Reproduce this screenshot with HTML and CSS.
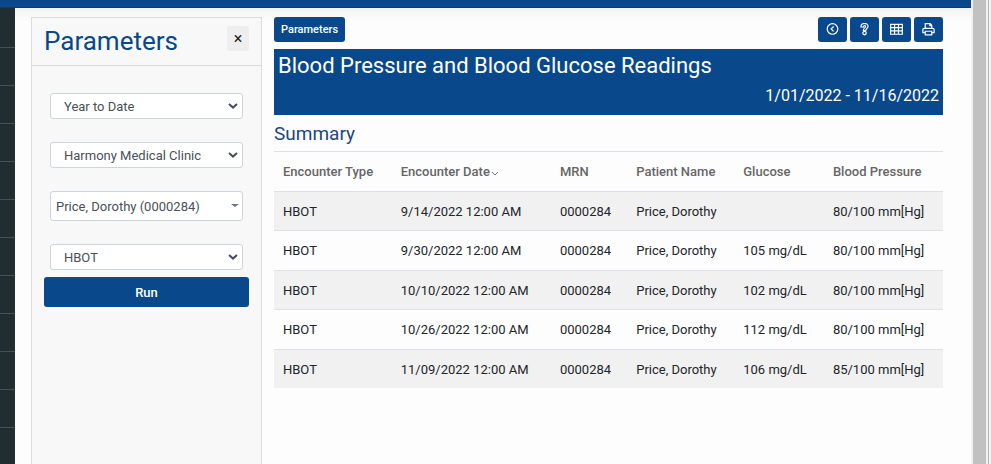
FILE: index.html
```
<!DOCTYPE html>
<html lang="en">
<head>
    <meta charset="UTF-8">
    <meta name="viewport" content="width=device-width, initial-scale=1.0">
    <title>Blood Pressure and Blood Glucose Readings</title>
    <link rel="stylesheet" href="styles.css">
</head>
<body>
<div class="app">
    <header class="topbar"></header>
    <div class="layout">
        <nav class="sidebar" aria-label="Main menu"></nav>
        <main class="page">
            <form class="panel">
                <div class="panel-header">
                    <h2>Parameters</h2>
                    <button type="button" class="close-btn" aria-label="Close">&times;</button>
                </div>
                <div class="panel-body">
                    <div class="fields">
                        <select class="field" aria-label="Date range">
                            <option>Year to Date</option>
                        </select>
                        <select class="field" aria-label="Clinic">
                            <option>Harmony Medical Clinic</option>
                        </select>
                        <div class="patient">
                            <select class="field patient-select" aria-label="Patient">
                                <option>Price, Dorothy (0000284)</option>
                            </select>
                        </div>
                        <select class="field" aria-label="Encounter type">
                            <option>HBOT</option>
                        </select>
                    </div>
                    <button type="button" class="btn run-btn">Run</button>
                </div>
            </form>

            <section class="report">
                <div class="toolbar">
                    <button type="button" class="btn">Parameters</button>
                    <div class="tools">
                        <button type="button" class="btn icon-btn" aria-label="Back">
                            <svg viewBox="0 0 12 12"><circle cx="6" cy="5.5" r="4.9"/><path d="M7 3.2L4.7 5.5L7 7.8"/></svg>
                        </button>
                        <button type="button" class="btn icon-btn" aria-label="Help">
                            <svg viewBox="0 0 12 12"><path d="M2.7 3.7C2.7 -0.6 9.3 -0.6 9.3 3.1C9.3 5.1 7.2 5.1 7.2 6.9H4.9C4.9 4.4 7 4.7 7 3.1C7 1.9 5 1.9 5 3.7Z"/><circle cx="6" cy="9.3" r="1.6"/></svg>
                        </button>
                        <button type="button" class="btn icon-btn" aria-label="Table">
                            <svg viewBox="0 0 12 12"><path d="M0.6 1.2H11.4V10.4H0.6ZM0.6 4.3H11.4M0.6 7.3H11.4M4.2 1.2V10.4M7.8 1.2V10.4"/></svg>
                        </button>
                        <button type="button" class="btn icon-btn" aria-label="Print">
                            <svg viewBox="0 0 12 12"><path d="M3 4.8V0.6H7.5L9 2.1V4.8M7.3 0.6V2.4H9M3 8.8H0.8V6.3Q0.8 5 2 5H10Q11.2 5 11.2 6.3V8.8H9M3 7.6H9V11H3Z"/></svg>
                        </button>
                    </div>
                </div>

                <div class="banner">
                    <h1>Blood Pressure and Blood Glucose Readings</h1>
                    <p>1/01/2022 - 11/16/2022</p>
                </div>

                <h3>Summary</h3>
                <table class="table">
                    <colgroup>
                        <col class="col-type">
                        <col class="col-date">
                        <col class="col-mrn">
                        <col class="col-name">
                        <col class="col-glucose">
                        <col class="col-pressure">
                    </colgroup>
                    <thead>
                    <tr>
                        <th>Encounter Type</th>
                        <th>Encounter Date <svg class="sort" viewBox="0 0 8 5"><path d="M1 1L4 4L7 1"/></svg></th>
                        <th>MRN</th>
                        <th>Patient Name</th>
                        <th>Glucose</th>
                        <th>Blood Pressure</th>
                    </tr>
                    </thead>
                    <tbody>
                    <tr>
                        <td>HBOT</td>
                        <td>9/14/2022 12:00 AM</td>
                        <td>0000284</td>
                        <td>Price, Dorothy</td>
                        <td></td>
                        <td>80/100 mm[Hg]</td>
                    </tr>
                    <tr>
                        <td>HBOT</td>
                        <td>9/30/2022 12:00 AM</td>
                        <td>0000284</td>
                        <td>Price, Dorothy</td>
                        <td>105 mg/dL</td>
                        <td>80/100 mm[Hg]</td>
                    </tr>
                    <tr>
                        <td>HBOT</td>
                        <td>10/10/2022 12:00 AM</td>
                        <td>0000284</td>
                        <td>Price, Dorothy</td>
                        <td>102 mg/dL</td>
                        <td>80/100 mm[Hg]</td>
                    </tr>
                    <tr>
                        <td>HBOT</td>
                        <td>10/26/2022 12:00 AM</td>
                        <td>0000284</td>
                        <td>Price, Dorothy</td>
                        <td>112 mg/dL</td>
                        <td>80/100 mm[Hg]</td>
                    </tr>
                    <tr>
                        <td>HBOT</td>
                        <td>11/09/2022 12:00 AM</td>
                        <td>0000284</td>
                        <td>Price, Dorothy</td>
                        <td>106 mg/dL</td>
                        <td>85/100 mm[Hg]</td>
                    </tr>
                    </tbody>
                </table>
            </section>
        </main>
    </div>
</div>
<div class="scroll-track"></div>
</body>
</html>
```
FILE: styles.css
```
* {
    box-sizing: border-box;
}
body {
    font-family: Roboto, "Liberation Sans", sans-serif;
    font-size: 13px;
    line-height: 1.5;
    margin: 0;
    color: #212529;
    background-color: #fdfdfd;
    display: flex;
    min-height: 100vh;
}
h1, h2, h3, p {
    margin: 0;
    font-weight: 400;
}
button, select {
    font-family: inherit;
    font-size: 13px;
}
.app {
    flex: 1;
    display: flex;
    flex-direction: column;
}
.topbar {
    height: 8px;
    background-color: #09488b;
    border-bottom: 1px solid #083c77;
}
.layout {
    flex: 1;
    display: flex;
}
.sidebar {
    width: 15px;
    border-top: 2px solid #222d32;
    background: repeating-linear-gradient(#222d32 0 37px, #434f59 37px 38px);
}
.page {
    flex: 1;
    display: flex;
    gap: 12px;
    padding: 9px 28px 0 16px;
    background: linear-gradient(#f3f3f3, #fdfdfd 14px);
}

/* parameters panel */
.panel {
    width: 231px;
    background-color: #f8f8f8;
    border: 1px solid #dcdcdc;
    border-bottom: none;
}
.panel-header {
    display: flex;
    justify-content: space-between;
    align-items: flex-start;
    height: 48px;
    padding: 8px 12px 0;
    border-bottom: 1px solid #dcdcdc;
}
.panel-header h2 {
    font-size: 26px;
    line-height: 30px;
    color: #09488b;
}
.close-btn {
    width: 22px;
    height: 25px;
    padding: 0;
    border: none;
    border-radius: 3px;
    background-color: #eee;
    color: #222;
    font-size: 16px;
    line-height: 24px;
}
.panel-body {
    padding: 27px 12px;
}
.fields {
    display: flex;
    flex-direction: column;
    gap: 23px;
    padding: 0 6px;
    margin-bottom: 7px;
}
.field {
    width: 100%;
    height: 26px;
    padding: 0 20px 0 13px;
    border: 1px solid #ced4da;
    border-radius: 3px;
    background: #fff url("data:image/svg+xml,%3Csvg xmlns='http://www.w3.org/2000/svg' viewBox='0 0 10 6'%3E%3Cpath d='M1 1L5 4.6L9 1' fill='none' stroke='%23474d5c' stroke-width='2'/%3E%3C/svg%3E") no-repeat right 4px center / 10px 6px;
    color: #495057;
    appearance: none;
}
.patient {
    position: relative;
}
.patient-select {
    display: block;
    height: 30px;
    padding-left: 5px;
    background-image: none;
}
.patient::after {
    content: "";
    position: absolute;
    right: 4px;
    top: 13px;
    border: 4px solid transparent;
    border-top: 3px solid #6b7280;
    border-bottom: none;
    pointer-events: none;
}

/* buttons */
.btn {
    height: 25px;
    padding: 0 7px;
    border: none;
    border-radius: 3px;
    background-color: #09488b;
    color: #fff;
    font-size: 11px;
    font-weight: 500;
    cursor: pointer;
}
.btn:hover {
    background-color: #073a70;
}
.run-btn {
    width: 100%;
    height: 30px;
    font-size: 13px;
}
.icon-btn {
    display: flex;
    justify-content: center;
    align-items: center;
    width: 29px;
}
.icon-btn svg {
    flex: none;
    width: 13px;
    height: 13px;
    fill: none;
    stroke: #fff;
    stroke-width: 1.1;
}

/* report */
.report {
    flex: 1;
}
.toolbar {
    display: flex;
    justify-content: space-between;
    margin-bottom: 7px;
}
.tools {
    display: flex;
    gap: 3px;
}
.banner {
    padding: 2px 4px 3px;
    background-color: #09488b;
    color: #fff;
}
.banner h1 {
    font-size: 22px;
    line-height: 29px;
}
.banner p {
    font-size: 16px;
    line-height: 32px;
    text-align: right;
}
.report h3 {
    padding: 4px 0 3px;
    font-size: 19px;
    line-height: 29px;
    color: #1d4683;
}
.table {
    width: 100%;
    table-layout: fixed;
    border-collapse: collapse;
}
.col-type { width: 17.6%; }
.col-date { width: 23.8%; }
.col-mrn { width: 11.4%; }
.col-name { width: 16%; }
.col-glucose { width: 13.4%; }
.col-pressure { width: 17.8%; }
.table th, .table td {
    padding: 10px 9px 9px;
    border-top: 1px solid #dee2e6;
    text-align: left;
    white-space: nowrap;
}
.table th {
    color: #666;
    font-weight: 500;
}
.table tbody tr:nth-child(odd) {
    background-color: #f1f1f1;
}
.sort {
    width: 8px;
    height: 5px;
    margin-left: -2px;
    fill: none;
    stroke: #777;
}

.scroll-track {
    width: 20px;
    border-left: 2px solid #f1f1f1;
    background: linear-gradient(to right, #c1c1c1 13px, #f1f1f1 13px 15px, #b5b5b5 15px 16px, #f5f5f5 16px);
}
```
